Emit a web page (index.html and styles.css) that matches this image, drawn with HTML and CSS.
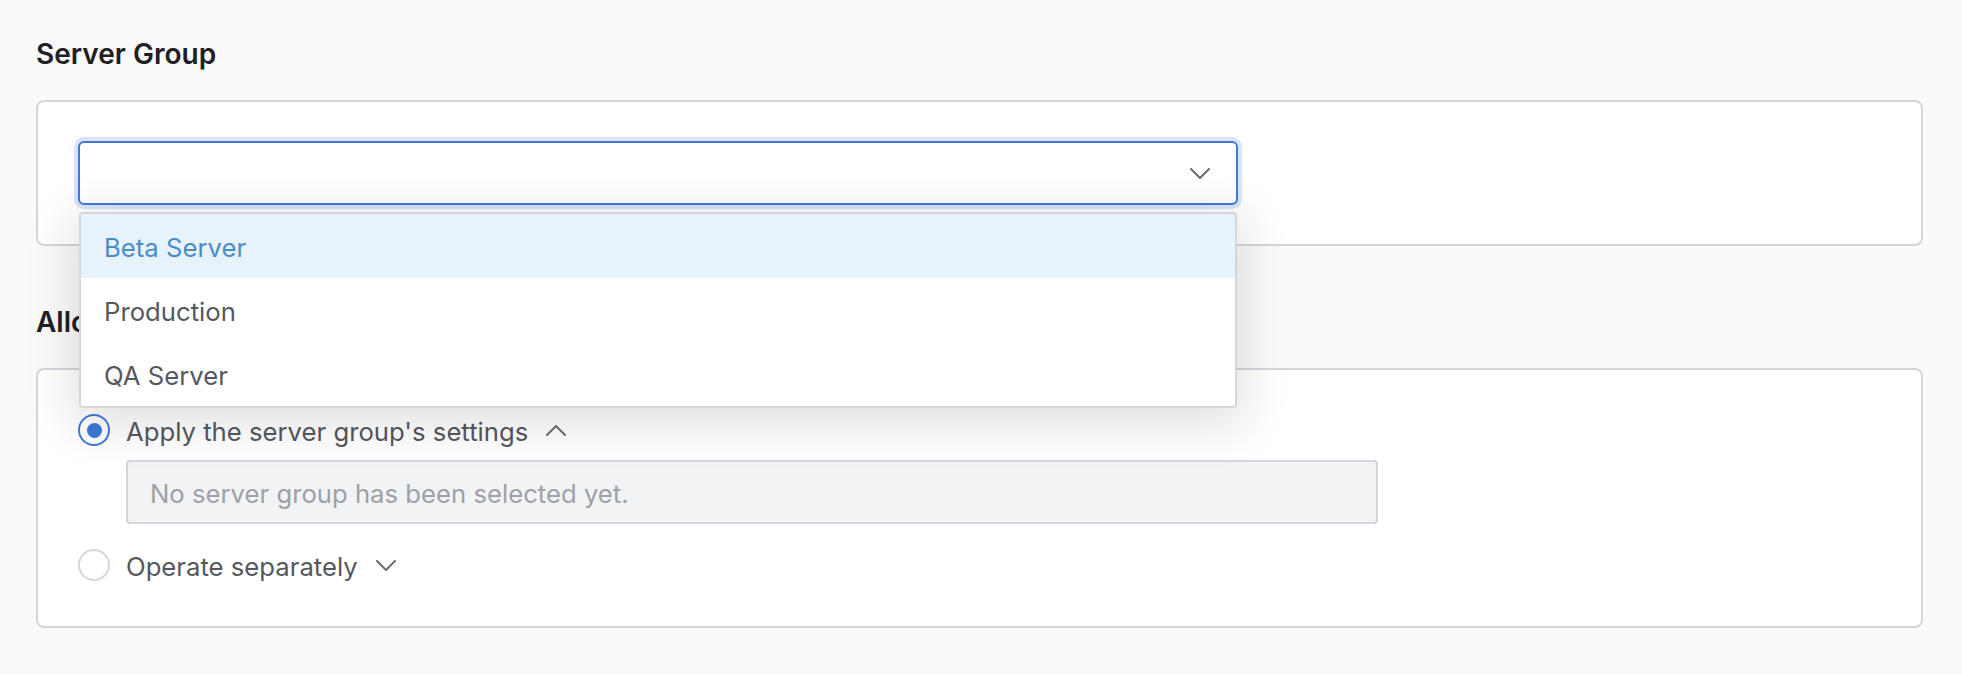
FILE: index.html
```html
<!DOCTYPE html>
<html lang="en">
<head>
<meta charset="utf-8">
<title>Server Group</title>
<link rel="stylesheet" href="styles.css">
</head>
<body>
<main class="page">
  <h2 class="section-title">Server Group</h2>
  <section class="card card-select">
    <div class="select-wrap">
      <div class="select is-open">
        <span class="select-value"></span>
        <svg class="chevron" viewBox="0 0 20 11" width="20" height="11" aria-hidden="true"><path d="M1 1 L10 10 L19 1" /></svg>
      </div>
      <ul class="menu">
        <li class="menu-item is-active">Beta Server</li>
        <li class="menu-item">Production</li>
        <li class="menu-item">QA Server</li>
      </ul>
    </div>
  </section>

  <h2 class="section-title section-title-next">Allocation Settings</h2>
  <section class="card card-options">
    <div class="option">
      <div class="radio-row">
        <span class="radio is-checked"></span>
        <span class="radio-label">Apply the server group's settings</span>
        <svg class="chevron chevron-toggle" viewBox="0 0 20 11" width="20" height="11" aria-hidden="true"><path d="M1 10 L10 1 L19 10" /></svg>
      </div>
      <div class="readonly-box">No server group has been selected yet.</div>
    </div>
    <div class="option option-next">
      <div class="radio-row">
        <span class="radio"></span>
        <span class="radio-label">Operate separately</span>
        <svg class="chevron chevron-toggle" viewBox="0 0 20 11" width="20" height="11" aria-hidden="true"><path d="M1 1 L10 10 L19 1" /></svg>
      </div>
    </div>
  </section>
</main>
</body>
</html>
```
FILE: styles.css
```css
* { box-sizing: border-box; }

html, body {
  margin: 0;
  padding: 0;
  background: #fafafa;
  font-family: Inter, "Liberation Sans", Arial, sans-serif;
  color: #55585e;
}

.page {
  padding: 38px 39px 40px 36px;
}

.section-title {
  margin: 0 0 30px 0;
  font-size: 28px;
  line-height: 32px;
  font-weight: 600;
  color: #1f2023;
}

.section-title-next {
  margin-top: 60px;
}

.card {
  background: #ffffff;
  border: 2px solid #d6d6da;
  border-radius: 8px;
}

.card-select {
  padding: 39px 40px;
}

.select-wrap {
  position: relative;
  width: 1160px;
}

.select {
  height: 64px;
  border: 2px solid #3f7ad6;
  border-radius: 6px;
  box-shadow: 0 0 0 4px #d9e5f6;
  background: #ffffff;
  display: flex;
  align-items: center;
  justify-content: space-between;
  padding: 0 26px 0 24px;
}

.chevron {
  display: block;
  fill: none;
  stroke: #6a6d72;
  stroke-width: 2;
  stroke-linecap: round;
  stroke-linejoin: round;
}

.menu {
  position: absolute;
  z-index: 10;
  top: calc(100% + 7px);
  left: 1px;
  right: 1px;
  margin: 0;
  padding: 0;
  list-style: none;
  background: #ffffff;
  border: 2px solid #d6d6da;
  border-radius: 4px;
  box-shadow: 0 10px 48px 8px rgba(0, 0, 0, 0.12);
  overflow: hidden;
}

.menu-item {
  height: 64px;
  display: flex;
  align-items: center;
  padding-left: 23px;
  padding-top: 2px;
  font-size: 25.7px;
  color: #55585e;
}

.menu-item.is-active {
  background: #e6f2fc;
  color: #4b8cc8;
}

.card-options {
  padding: 41px 40px 42px 40px;
}

.option-next {
  margin-top: 22px;
}

.radio-row {
  height: 38px;
  display: flex;
  align-items: center;
}

.radio {
  width: 32px;
  height: 32px;
  flex: none;
  border-radius: 50%;
  border: 2px solid #d6d6da;
  background: #ffffff;
  display: flex;
  align-items: center;
  justify-content: center;
}

.radio.is-checked {
  border-color: #3f7ad6;
}

.radio.is-checked::after {
  content: "";
  width: 15px;
  height: 15px;
  border-radius: 50%;
  background: #3f7ad6;
}

.radio-label {
  margin-left: 16px;
  padding-top: 3px;
  font-size: 25.7px;
  color: #55585e;
}

.chevron-toggle {
  margin-left: 18px;
}

.readonly-box {
  margin: 11px 0 0 48px;
  width: 1252px;
  height: 64px;
  display: flex;
  align-items: center;
  padding: 2px 0 0 22px;
  background: #f2f3f5;
  border: 2px solid #d6d6da;
  border-radius: 4px;
  font-size: 25.7px;
  color: #9ea1a7;
}
```
